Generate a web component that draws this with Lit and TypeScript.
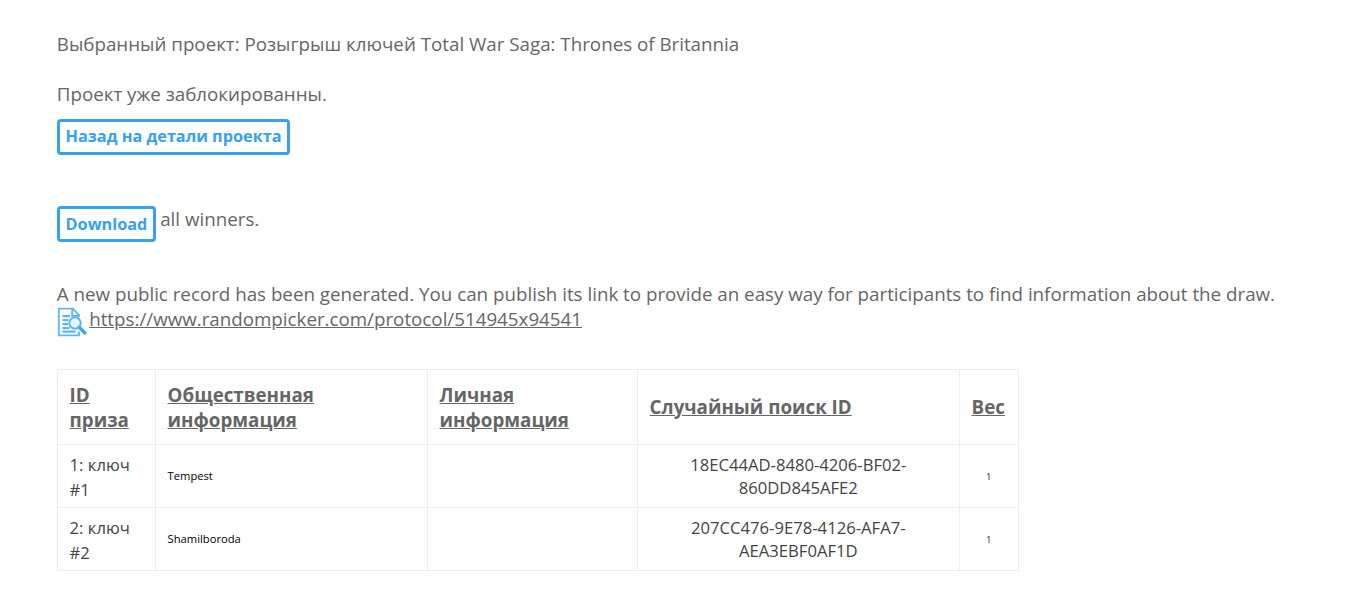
import { LitElement, css, html } from 'lit'
import { customElement, property } from 'lit/decorators.js'

interface Winner {
  prize: string
  publicInfo: string
  privateInfo: string
  searchId: string
  weight: number
}

@customElement('app-root')
export class AppRoot extends LitElement {
  @property({ type: String }) project = 'Розыгрыш ключей Total War Saga: Thrones of Britannia'

  @property({ type: String }) protocolUrl = 'https://www.randompicker.com/protocol/514945x94541'

  @property({ type: Array }) winners: Winner[] = [
    {
      prize: '1: ключ #1',
      publicInfo: 'Tempest',
      privateInfo: '',
      searchId: '18EC44AD-8480-4206-BF02-860DD845AFE2',
      weight: 1,
    },
    {
      prize: '2: ключ #2',
      publicInfo: 'Shamilboroda',
      privateInfo: '',
      searchId: '207CC476-9E78-4126-AFA7-AEA3EBF0AF1D',
      weight: 1,
    },
  ]

  renderIcon() {
    return html`
      <svg class="icon" viewBox="0 0 30 30" width="30" height="30" fill="none" stroke="#5cb6f4">
        <path d="M22 24.5v3.8H1.8V1.7h14L22 8v2" stroke-width="1.8" />
        <path d="M15.2 2v6.8H22" stroke-width="1.8" />
        <path d="M5.5 9.2h7.5M5.5 13.2h6M5.5 17.2h5.5M5.5 21.2h7M5.5 24.6h13" stroke-width="2.2" />
        <circle cx="18" cy="16" r="5.7" fill="#e6f4fe" stroke-width="2" />
        <path d="M22.3 20.3l5.6 5.7" stroke="#45a9f2" stroke-width="3.4" stroke-linecap="round" />
      </svg>
    `
  }

  render() {
    return html`
      <p class="project">Выбранный проект: ${this.project}</p>
      <p class="blocked">Проект уже заблокированны.</p>
      <div><a class="button">Назад на детали проекта</a></div>

      <div class="download">
        <a class="button">Download</a>
        <span>all winners.</span>
      </div>

      <p class="record">A new public record has been generated. You can publish its link to provide an easy way for participants to find information about the draw.</p>
      <div class="protocol">
        ${this.renderIcon()}
        <a class="link">${this.protocolUrl}</a>
      </div>

      <table>
        <colgroup>
          <col class="col-prize" />
          <col class="col-public" />
          <col class="col-private" />
          <col class="col-search" />
          <col class="col-weight" />
        </colgroup>
        <thead>
          <tr>
            <th>ID приза</th>
            <th>Общественная информация</th>
            <th>Личная информация</th>
            <th>Случайный поиск ID</th>
            <th>Вес</th>
          </tr>
        </thead>
        <tbody>
          ${this.winners.map(
            (w) => html`
              <tr>
                <td class="prize">${w.prize}</td>
                <td class="small">${w.publicInfo}</td>
                <td class="small">${w.privateInfo}</td>
                <td class="search">${w.searchId}</td>
                <td class="small weight">${w.weight}</td>
              </tr>
            `
          )}
        </tbody>
      </table>
    `
  }

  static get styles() {
    return css`
      :host {
        display: block;
        box-sizing: border-box;
        height: 592px;
        padding: 31px 57px 0 56.8px;
        overflow: hidden;
        background: #fff;
        color: #666;
        font-family: 'Open Sans', 'Noto Sans', sans-serif;
        font-size: 18.76px;
        line-height: 25px;
      }
      p {
        margin: 0;
        white-space: nowrap;
      }
      .project {
        margin-bottom: 25px;
      }
      .blocked {
        margin-bottom: 13px;
      }
      .button {
        display: block;
        box-sizing: border-box;
        width: fit-content;
        height: 36px;
        padding: 0 5.8px;
        border: 3px solid #34a1f2;
        border-radius: 4px;
        color: #34a1f2;
        font-size: 16.25px;
        font-weight: 700;
        line-height: 29px;
        white-space: nowrap;
      }
      .download {
        display: flex;
        gap: 4px;
        margin-top: 51px;
      }
      .download .button {
        line-height: 30px;
      }
      .record {
        margin-top: 39px;
      }
      .protocol {
        display: flex;
        gap: 2.4px;
        height: 31px;
      }
      .icon {
        display: block;
        margin-top: 1px;
      }
      .link {
        text-decoration: underline;
      }
      table {
        width: 961px;
        margin-top: 32px;
        border-collapse: collapse;
        table-layout: fixed;
      }
      .col-prize {
        width: 98px;
      }
      .col-public {
        width: 272px;
      }
      .col-private {
        width: 210px;
      }
      .col-search {
        width: 322px;
      }
      .col-weight {
        width: 59px;
      }
      th,
      td {
        box-sizing: border-box;
        padding: 0 11.8px;
        border: 1px solid #eee;
        text-align: left;
        vertical-align: middle;
      }
      th {
        height: 75px;
        font-weight: 700;
        text-decoration: underline;
      }
      th:nth-child(n + 4) {
        padding-bottom: 2px;
      }
      td {
        height: 63px;
        color: #444;
        font-size: 16.65px;
      }
      .prize {
        padding-top: 2px;
      }
      .small {
        padding-bottom: 2px;
        color: #000;
        font-size: 11.2px;
      }
      .search {
        padding-bottom: 1px;
        line-height: 23px;
        text-align: center;
      }
      .weight {
        padding-bottom: 0;
        color: #222;
        font-size: 9.5px;
        text-align: center;
      }
    `
  }
}
